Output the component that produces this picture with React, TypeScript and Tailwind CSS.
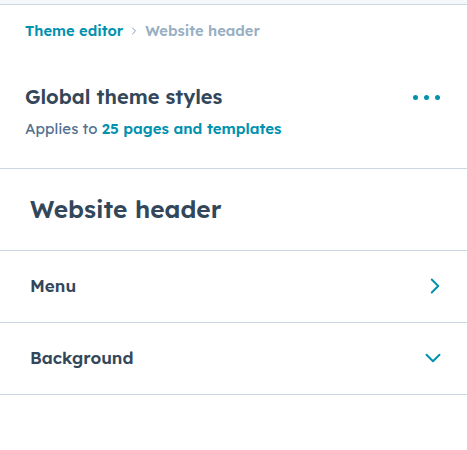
import { ChevronRight, ChevronDown } from "lucide-react";

const font = { fontFamily: '"Lexend Deca", "Noto Sans", "Liberation Sans", sans-serif' };

function Row({ label, open }: { label: string; open?: boolean }) {
  return (
    <div className="flex h-[72px] items-center justify-between border-b border-[#cbd6e2] pl-[30px] pr-[19px]">
      <span className="text-[17px] font-semibold text-[#33475b]">{label}</span>
      {open ? (
        <ChevronDown className="mr-[2px] h-[26px] w-[26px] text-[#0091ae]" strokeWidth={1.8} />
      ) : (
        <ChevronRight className="h-[26px] w-[26px] text-[#0091ae]" strokeWidth={1.8} />
      )}
    </div>
  );
}

export default function App() {
  return (
    <div className="h-[450px] w-[467px] bg-white" style={font}>
      <div className="h-[5px] border-b border-[#cbd6e2] bg-[#f5f8fa]" />
      <nav className="flex items-center gap-[5px] px-[25px] pt-[15px] text-[14.7px] font-semibold">
        <span className="text-[#0091ae]">Theme editor</span>
        <ChevronRight className="h-[12px] w-[12px] text-[#7c98b6]" strokeWidth={2} />
        <span className="text-[#99afc4]">Website header</span>
      </nav>
      <div className="flex items-start justify-between border-b border-[#cbd6e2] px-[25px] pb-[27px] pt-[41px]">
        <div>
          <h2 className="text-[20px] font-semibold leading-[28px] text-[#33475b]">Global theme styles</h2>
          <p className="mt-[7px] text-[15px] text-[#516f90]">
            Applies to <span className="font-semibold text-[#0091ae]">25 pages and templates</span>
          </p>
        </div>
        <div className="mt-[12px] flex gap-[6px] pr-[2px]">
          <span className="h-[5px] w-[5px] rounded-full bg-[#0091ae]" />
          <span className="h-[5px] w-[5px] rounded-full bg-[#0091ae]" />
          <span className="h-[5px] w-[5px] rounded-full bg-[#0091ae]" />
        </div>
      </div>
      <div className="flex h-[82px] items-center border-b border-[#cbd6e2] px-[30px]">
        <h1 className="text-[24.5px] font-semibold text-[#33475b]">Website header</h1>
      </div>
      <Row label="Menu" />
      <Row label="Background" open />
    </div>
  );
}
